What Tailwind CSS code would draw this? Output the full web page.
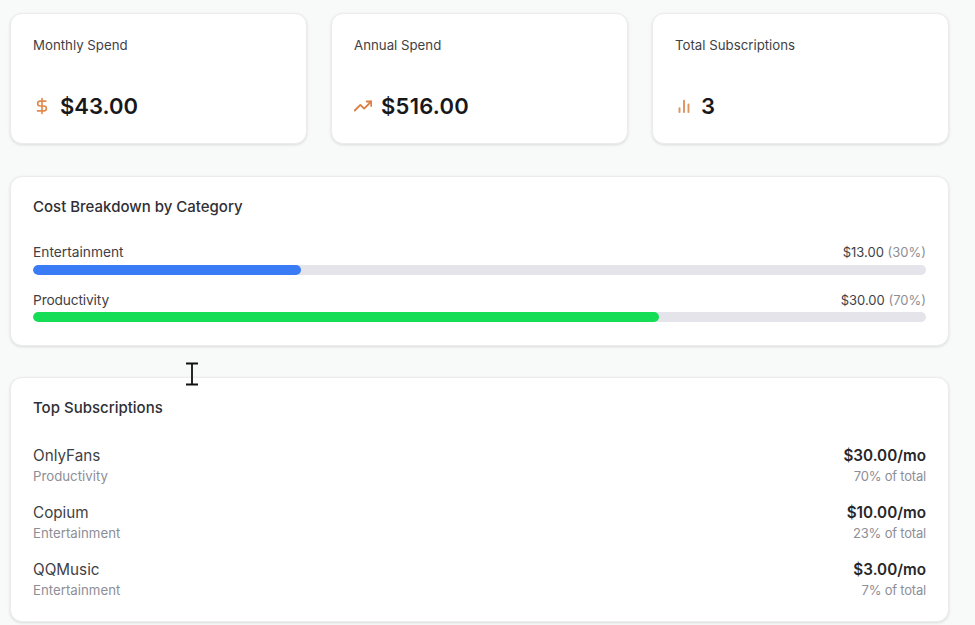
<!DOCTYPE html>
<html>
<head>
<meta charset="utf-8">
<script src="https://cdn.jsdelivr.net/npm/@tailwindcss/browser@4"></script>
</head>
<body class="relative h-[625px] w-[975px] overflow-hidden bg-[#f8f9f9] font-['Inter','Liberation_Sans',sans-serif] text-[#27272a]">
<main class="flex flex-col pl-[10px] pr-[26px] pt-[13px]">
  <section class="grid grid-cols-3 gap-[24px]">
    <div class="flex h-[131px] flex-col rounded-[12px] border border-[#ececee] bg-white px-[22px] pt-[23px] shadow-[0_1px_3px_rgba(0,0,0,0.12)]">
      <div class="text-[13.25px] leading-[16px] text-[#3f3f46]">Monthly Spend</div>
      <div class="mt-[38px] flex items-center gap-[9px]">
        <svg class="h-[18px] w-[18px] text-[#e08a4f]" viewBox="0 0 24 24" fill="none" stroke="currentColor" stroke-width="2.2" stroke-linecap="round" stroke-linejoin="round"><line x1="12" y1="2" x2="12" y2="22"/><path d="M17 5.5H9.5a3.25 3.25 0 0 0 0 6.5h5a3.25 3.25 0 0 1 0 6.5H6"/></svg>
        <span class="text-[22px] leading-[30px] font-semibold text-[#18181b]">$43.00</span>
      </div>
    </div>
    <div class="flex h-[131px] flex-col rounded-[12px] border border-[#ececee] bg-white px-[22px] pt-[23px] shadow-[0_1px_3px_rgba(0,0,0,0.12)]">
      <div class="text-[13.25px] leading-[16px] text-[#3f3f46]">Annual Spend</div>
      <div class="mt-[38px] flex items-center gap-[9px]">
        <svg class="h-[18px] w-[18px] text-[#dc7f42]" viewBox="0 0 24 24" fill="none" stroke="currentColor" stroke-width="2.4" stroke-linecap="round" stroke-linejoin="round"><polyline points="23 6 13.5 15.5 8.5 10.5 1 18"/><polyline points="17 6 23 6 23 12"/></svg>
        <span class="text-[22px] leading-[30px] font-semibold tracking-[0.25px] text-[#18181b]">$516.00</span>
      </div>
    </div>
    <div class="flex h-[131px] flex-col rounded-[12px] border border-[#ececee] bg-white px-[22px] pt-[23px] shadow-[0_1px_3px_rgba(0,0,0,0.12)]">
      <div class="text-[13.25px] leading-[16px] text-[#3f3f46]">Total Subscriptions</div>
      <div class="mt-[38px] flex items-center gap-[8px]">
        <svg class="h-[18px] w-[18px] text-[#dd9566]" viewBox="0 0 24 24" fill="none" stroke="currentColor" stroke-width="2.6" stroke-linecap="round" stroke-linejoin="round"><line x1="12" y1="20" x2="12" y2="5"/><line x1="18" y1="20" x2="18" y2="10"/><line x1="6" y1="20" x2="6" y2="15"/></svg>
        <span class="text-[22px] leading-[30px] font-semibold text-[#18181b]">3</span>
      </div>
    </div>
  </section>

  <section class="mt-[32px] h-[170px] rounded-[12px] border border-[#ececee] bg-white px-[22px] pt-[20px] shadow-[0_1px_3px_rgba(0,0,0,0.12)]">
    <h2 class="text-[15px] leading-[20px] font-medium text-[#2f2f35]">Cost Breakdown by Category</h2>
    <div class="mt-[26px] flex flex-col gap-[16px]">
      <div>
        <div class="flex justify-between text-[13.75px] leading-[18px] text-[#3f3f46]"><span>Entertainment</span><span class="text-[13px]">$13.00 <span class="text-[#8e8e96]">(30%)</span></span></div>
        <div class="mt-[4px] h-[10px] overflow-hidden rounded-full bg-[#e4e4ea]"><div class="h-full rounded-full bg-[#3a7cf6]" style="width:30%"></div></div>
      </div>
      <div>
        <div class="flex justify-between text-[13.75px] leading-[18px] text-[#3f3f46]"><span class="tracking-[-0.15px]">Productivity</span><span class="text-[13px]">$30.00 <span class="text-[#8e8e96]">(70%)</span></span></div>
        <div class="mt-[3px] h-[10px] overflow-hidden rounded-full bg-[#e4e4ea]"><div class="h-full rounded-full bg-[#15dd55]" style="width:70.1%"></div></div>
      </div>
    </div>
  </section>

  <section class="mt-[31px] h-[245px] rounded-[12px] border border-[#ececee] bg-white px-[22px] pt-[20px] shadow-[0_1px_3px_rgba(0,0,0,0.12)]">
    <h2 class="text-[15px] leading-[20px] font-medium text-[#2f2f35]">Top Subscriptions</h2>
    <div class="mt-[28px] flex flex-col gap-[17px]">
      <div class="flex justify-between">
        <div><div class="text-[15.25px] leading-[20px] text-[#3f3f46]">OnlyFans</div><div class="text-[13.25px] leading-[20px] text-[#8e8e96]">Productivity</div></div>
        <div class="text-right"><div class="text-[15.25px] leading-[20px] font-semibold text-[#27272a]">$30.00/mo</div><div class="text-[13px] leading-[20px] tracking-[-0.2px] text-[#8e8e96]">70% of total</div></div>
      </div>
      <div class="flex justify-between">
        <div><div class="text-[15.25px] leading-[20px] text-[#3f3f46]">Copium</div><div class="text-[13.25px] leading-[20px] text-[#8e8e96]">Entertainment</div></div>
        <div class="text-right"><div class="text-[15.25px] leading-[20px] font-semibold text-[#27272a]">$10.00/mo</div><div class="text-[13px] leading-[20px] tracking-[-0.2px] text-[#8e8e96]">23% of total</div></div>
      </div>
      <div class="flex justify-between">
        <div><div class="text-[15.25px] leading-[20px] text-[#3f3f46]">QQMusic</div><div class="text-[13.25px] leading-[20px] text-[#8e8e96]">Entertainment</div></div>
        <div class="text-right"><div class="text-[15.25px] leading-[20px] font-semibold text-[#27272a]">$3.00/mo</div><div class="text-[13px] leading-[20px] tracking-[-0.2px] text-[#8e8e96]">7% of total</div></div>
      </div>
    </div>
  </section>
</main>
<svg class="absolute left-[185px] top-[362px] h-[24px] w-[14px]" viewBox="0 0 14 24" fill="none" stroke="#111" stroke-width="1.8"><path d="M1 1.5h12M7 1.5v21M1 22.5h12"/></svg>
</body>
</html>
